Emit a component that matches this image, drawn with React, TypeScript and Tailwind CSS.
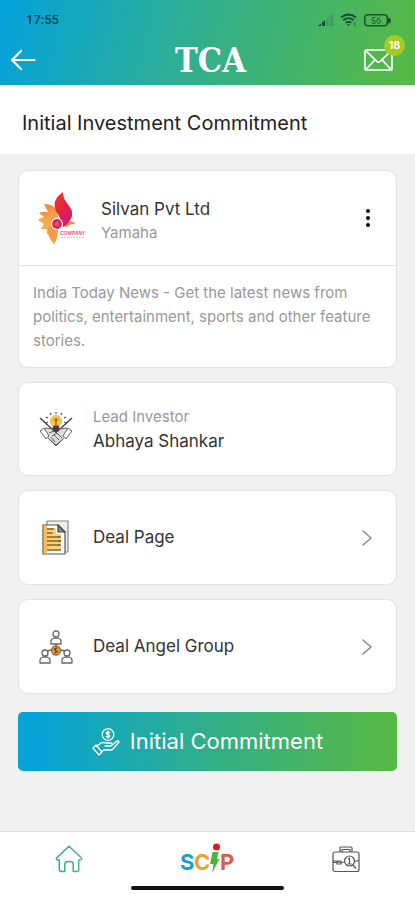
import type { ReactNode } from 'react';

function SignalIcon() {
  return (
    <svg viewBox="0 0 16 12" className="h-3 w-4" aria-hidden="true">
      <path d="M0 12l3-2.500V12zM4 12V8.500L7 6v6z" fill="#164a39" />
      <path d="M8 12V5.300L11 3v9zM12 12V2.200L15.500 0v12z" fill="#164a39" opacity="0.2" />
    </svg>
  );
}

function WifiIcon() {
  return (
    <svg viewBox="0 0 18 14" className="h-3.5 w-[18px]" fill="none" stroke="#184c34" strokeWidth="1.8" aria-hidden="true">
      <path d="M1 4.500Q8.500-1.500 16 4.500M3.300 7.200q5.200-4 10.400 0M5.700 9.800q2.800-2 5.600 0" />
      <path d="M7 11h3l-1.500 2z" fill="#184c34" stroke="none" />
      <path d="M14.500 9v4" strokeWidth="1.500" opacity="0.5" />
    </svg>
  );
}

function BatteryIcon() {
  return (
    <svg viewBox="0 0 27 13" className="h-[13px] w-[27px]" aria-hidden="true">
      <rect x="0.800" y="0.800" width="22.500" height="11" rx="3" fill="none" stroke="#1d5334" strokeWidth="1.500" />
      <path d="M24 3.500q3 .5 3 3t-3 3z" fill="#1d5334" />
      <text x="12" y="9.500" textAnchor="middle" fontSize="9" fontWeight="500" fill="#2a6b3d" fontFamily="Roboto, sans-serif">56</text>
    </svg>
  );
}

function BackIcon() {
  return (
    <svg viewBox="0 0 26 22" className="h-[22px] w-[26px]" fill="none" stroke="white" strokeWidth="2.200" strokeLinecap="round" strokeLinejoin="round" aria-hidden="true">
      <path d="M24.500 11H2M11 2L2 11l9 9" />
    </svg>
  );
}

function MailIcon() {
  return (
    <svg viewBox="0 0 29 22" className="h-[22px] w-[29px]" fill="none" stroke="white" strokeWidth="1.700" strokeLinejoin="round" aria-hidden="true">
      <rect x="1" y="1" width="27" height="20" rx="1" />
      <path d="M1.500 1.500l11.300 10.800q1.700 1.500 3.400 0L27.500 1.500M2 20.500l8.500-9.300M27 20.500l-8.500-9.300" />
    </svg>
  );
}

function CompanyLogo() {
  return (
    <svg viewBox="0 0 50 54" className="h-[54px] w-[50px]" role="img" aria-label="Company logo">
      <defs>
        <linearGradient id="petal" x1="0" y1="0" x2="0.400" y2="1">
          <stop offset="0" stopColor="#f47a3c" />
          <stop offset="1" stopColor="#f8b04f" />
        </linearGradient>
        <linearGradient id="flame" x1="0" y1="0" x2="0.500" y2="1">
          <stop offset="0" stopColor="#f0442f" />
          <stop offset="0.500" stopColor="#e8213f" />
          <stop offset="1" stopColor="#cf1c78" />
        </linearGradient>
      </defs>
      <path d="M7 13q11 0 14 9l1 10-6 2-9-4-6-1q3-2 6-3l-5-4q4-2 9-1z" fill="url(#petal)" />
      <path d="M1 29q8-4 14 0l5 5-3 5q-4 0-7 5l0-6-6 0 3-5z" fill="#f8aa50" />
      <path d="M12 35q-4 8 5 18 4-5 4-16z" fill="#f79945" />
      <path d="M25 35q7-9 14-2-5-1-9 3z" fill="#f18b36" />
      <path d="M26 1q-12 8-7 19 6 7 3 13l4 3q7-4 9-11c2-10-9-12-9-24z" fill="url(#flame)" />
      <circle cx="20" cy="33" r="5.500" fill="#d81d64" stroke="white" strokeWidth="1.200" />
      <circle cx="20" cy="33" r="2.500" fill="#ef4d48" />
      <text x="23" y="44" fontSize="5" fontStyle="italic" fontWeight="700" fill="#e4568e" fontFamily="Liberation Sans, sans-serif">COMPANY</text>
      <path d="M24 46.500h24" stroke="#ccc" strokeWidth="1" strokeDasharray="2 1" />
    </svg>
  );
}

function InvestorIcon() {
  return (
    <svg viewBox="0 0 34 34" className="h-[34px] w-[34px]" fill="none" stroke="#555" strokeWidth="0.900" strokeLinejoin="round" aria-hidden="true">
      <path d="M1 6l12 11M33 6L21 17" stroke="#444" strokeWidth="1.400" />
      <path d="M4 18l3-2 6 1 4 3 4-3 6-1 3 2-3 6-10 10-10-10z" fill="#ddd" />
      <path d="M1 19l4-3 5 8-3 3zM33 19l-4-3-5 8 3 3z" fill="#fff" />
      <path d="M10 21l5-2 4 3 4 4M12 25l4 5M15 23l5 5M18 21l-5 3M10 27l7 6 7-6" />
      <path d="M17 0v2M11 1l1 2M23 1l-1 2M7 5l2 1M27 5l-2 1M7 11l2-1M27 11l-2-1" strokeWidth="1.200" />
      <circle cx="17" cy="9" r="5.500" fill="#f6c14a" stroke="#eab548" />
      <path d="M17 6v7M15 8h4" stroke="#87601d" strokeWidth="1.200" />
      <path d="M14.500 14h5l1 4-3.500 2.500-3.500-2.500z" fill="#4a3a3b" stroke="#4a3a3b" />
    </svg>
  );
}

function DocumentIcon() {
  return (
    <svg viewBox="0 0 28 36" className="h-9 w-7" fill="none" strokeWidth="1.200" strokeLinejoin="round" aria-hidden="true">
      <path d="M5 5V1h21v31h-3" fill="#eee" stroke="#888" />
      <path d="M1 5h15l7 7v22H1z" fill="#fff" stroke="#555" />
      <path d="M4 8h10v6h5v16H4z" fill="#f9d27a" />
      <path d="M2 33.400V6h3v27.400z" fill="#f6bd50" />
      <path d="M16 5v7h7z" fill="#888" stroke="#444" />
      <path d="M5 9h7M5 13h6M5 17h13M5 21h14M5 25h13M5 30h14" stroke="#8b6424" strokeWidth="1.300" />
      <path d="M16 17h3M16 21h3M16 25h3" stroke="#555" />
    </svg>
  );
}

function GroupIcon() {
  return (
    <svg viewBox="0 0 34 34" className="h-[34px] w-[34px]" fill="none" stroke="#666" strokeWidth="1.300" strokeLinejoin="round" aria-hidden="true">
      <path d="M17 14v3M12 20l-4 1M22 20l4 1" />
      <circle cx="17" cy="4" r="3" />
      <path d="M12 14v-3q0-2 3-3h4q3 1 3 3v3z" />
      <circle cx="6" cy="23" r="3" />
      <path d="M1 33v-3q0-2 3-3h4q3 1 3 3v3z" />
      <circle cx="28" cy="23" r="3" />
      <path d="M23 33v-3q0-2 3-3h4q3 1 3 3v3z" />
      <circle cx="17" cy="20.500" r="4.500" fill="#dca43b" stroke="#946a32" />
      <path d="M15 18.500l4 4M18.500 18q-3 0-2 2.500t-1 2.500" stroke="#71421c" />
    </svg>
  );
}

function HandCoinIcon() {
  return (
    <svg viewBox="0 0 28 28" className="h-7 w-7" fill="none" stroke="white" strokeWidth="1.300" strokeLinecap="round" strokeLinejoin="round" aria-hidden="true">
      <circle cx="16" cy="6.500" r="5.800" />
      <path d="M17.800 4.500q-3.500-1-3.500.8 0 1 1.700 1.200t1.700 1.400q0 1.700-3.500.7M16 3v7" />
      <path d="M5 18l4-3q2-1 5 0h5q2 1 0 3h-6M20 17l5-4q2-.5 2 1l-6 7q-1 1-3 1h-6l-3 2" />
      <path d="M1 20l3-3 6 7-3 3z" />
    </svg>
  );
}

function HomeIcon() {
  return (
    <svg viewBox="0 0 28 28" className="h-7 w-7" fill="none" stroke="url(#home)" strokeWidth="1.500" strokeLinejoin="round" aria-hidden="true">
      <defs>
        <linearGradient id="home">
          <stop offset="0" stopColor="#28a99a" />
          <stop offset="1" stopColor="#50b875" />
        </linearGradient>
      </defs>
      <path d="M14 1.200L1.500 13q-.8 2.500 2.800 2v9.500q0 2 2 2h3.500v-7q0-3 3-3h2.400q3 0 3 3v7h3.500q2 0 2-2V15q3.600.5 2.800-2z" />
    </svg>
  );
}

function ScipLogo() {
  return (
    <svg viewBox="0 0 54 32" className="h-8 w-[54px]" role="img" aria-label="SCIP">
      <g fontFamily="Inter, sans-serif" fontSize="22" fontWeight="700">
        <text x="0" y="27" fill="#1c9ed2">S</text>
        <text x="14" y="27" fill="#e9a32b">C</text>
        <text x="40" y="27" fill="#d95e48">P</text>
      </g>
      <path d="M32.500 9h6l-1.500 7h2.500L32 30l1.500-9H30z" fill="#4db43c" />
      <circle cx="36.500" cy="4" r="3.500" fill="#df1721" />
    </svg>
  );
}

function BriefcaseIcon() {
  return (
    <svg viewBox="0 0 28 27" className="h-[27px] w-7" fill="none" stroke="#555" strokeWidth="1.200" strokeLinejoin="round" aria-hidden="true">
      <path d="M8 6V2q0-1 1-1h10q1 0 1 1v4M10 6V3.500h8V6" />
      <rect x="1" y="6" width="26" height="19.500" rx="2" />
      <path d="M1 14.500q5 2 11 2M1 16.500h4M22 15.500l5-1" />
      <rect x="5" y="15" width="4" height="3" />
      <circle cx="17.500" cy="15" r="5" />
      <path d="M21 19l3 3.500M16 13l1.500-1v6M15.500 18h4" />
    </svg>
  );
}

function Chevron() {
  return (
    <svg viewBox="0 0 10 16" className="h-4 w-2.5" fill="none" stroke="#888" strokeWidth="1.500" strokeLinecap="round" strokeLinejoin="round" aria-hidden="true">
      <path d="M1 1l8 7-8 7" />
    </svg>
  );
}

interface LinkCardProps {
  icon: ReactNode;
  label: string;
}

function LinkCard({ icon, label }: LinkCardProps) {
  return (
    <a
      href="#"
      className="flex h-[95px] items-center rounded-[10px] border border-[#e2e2e2] bg-white pr-6 pl-5 text-[17px] text-[#333]"
    >
      <span className="flex w-[34px] justify-center">{icon}</span>
      <span className="ml-5 flex-1">{label}</span>
      <Chevron />
    </a>
  );
}

export default function App() {
  return (
    <div className="flex min-h-screen flex-col bg-[#f1f1f1] font-['Inter',sans-serif]">
      <header className="bg-linear-[105deg,#06a3d8_3%,#33b08a_50%,#55b848_95%] pb-1.5">
        <div className="flex h-10 items-center justify-between pr-6 pl-[26px]">
          <span className="font-['Roboto',sans-serif] text-[13px] font-medium text-[#14435a]">17:55</span>
          <div className="flex items-center gap-1.5">
            <SignalIcon />
            <WifiIcon />
            <BatteryIcon />
          </div>
        </div>
        <div className="grid h-[39px] grid-cols-3 items-center px-2.5">
          <button aria-label="Back" className="justify-self-start">
            <BackIcon />
          </button>
          <span className="justify-self-center pl-1.5 font-['DejaVu_Serif_Condensed','DejaVu_Serif',serif] text-[34px] leading-10 font-bold text-white">
            TCA
          </span>
          <button aria-label="Messages" className="relative mr-3 justify-self-end">
            <MailIcon />
            <span className="absolute -top-3.5 -right-3 flex size-[21px] items-center justify-center rounded-full bg-[#a7ca24] text-[11px] font-semibold text-white">
              18
            </span>
          </button>
        </div>
      </header>

      <div className="flex h-[69px] items-center border-t-2 border-[#f4f4f4] bg-white px-[22px] pt-1">
        <h1 className="text-xl text-[#222]">Initial Investment Commitment</h1>
      </div>

      <main className="flex flex-col gap-3.5 px-[18px] pt-4">
        <section className="rounded-[10px] border border-[#e2e2e2] bg-white">
          <div className="flex h-[95px] items-center border-b border-[#e2e2e2] pr-[22px] pl-[18px]">
            <CompanyLogo />
            <div className="ml-3.5 flex-1 pt-1.5">
              <h2 className="text-[17px] leading-6 text-[#333]">Silvan Pvt Ltd</h2>
              <p className="text-[15px] leading-6 text-[#999]">Yamaha</p>
            </div>
            <button aria-label="More options" className="flex flex-col gap-[3px] p-1">
              <span className="size-1 rounded-full bg-black" />
              <span className="size-1 rounded-full bg-black" />
              <span className="size-1 rounded-full bg-black" />
            </button>
          </div>
          <p className="px-3.5 pt-[15px] pb-3.5 text-[15px] leading-6 text-[#999]">
            India Today News - Get the latest news from politics, entertainment, sports and other feature stories.
          </p>
        </section>

        <section className="flex h-[94px] items-center rounded-[10px] border border-[#e2e2e2] bg-white px-5">
          <InvestorIcon />
          <div className="ml-5">
            <p className="text-[15px] leading-6 text-[#999]">Lead Investor</p>
            <p className="text-[17px] leading-6 text-[#333]">Abhaya Shankar</p>
          </div>
        </section>

        <LinkCard icon={<DocumentIcon />} label="Deal Page" />
        <LinkCard icon={<GroupIcon />} label="Deal Angel Group" />

        <button className="mt-1 flex h-[59px] items-center justify-center gap-2.5 rounded-[5px] bg-linear-[90deg,#06a3d8_4%,#32af87_52%,#55b848_95%] text-[22px] text-white">
          <HandCoinIcon />
          Initial Commitment
        </button>
      </main>

      <nav className="mt-auto border-t border-[#dedede] bg-white pb-1.5">
        <div className="grid h-[54px] grid-cols-3 items-center justify-items-center">
          <a href="#" aria-label="Home">
            <HomeIcon />
          </a>
          <a href="#" aria-label="SCIP">
            <ScipLogo />
          </a>
          <a href="#" aria-label="Portfolio">
            <BriefcaseIcon />
          </a>
        </div>
        <div className="mx-auto mb-1 h-1 w-[37%] rounded-full bg-[#111]" />
      </nav>
    </div>
  );
}
